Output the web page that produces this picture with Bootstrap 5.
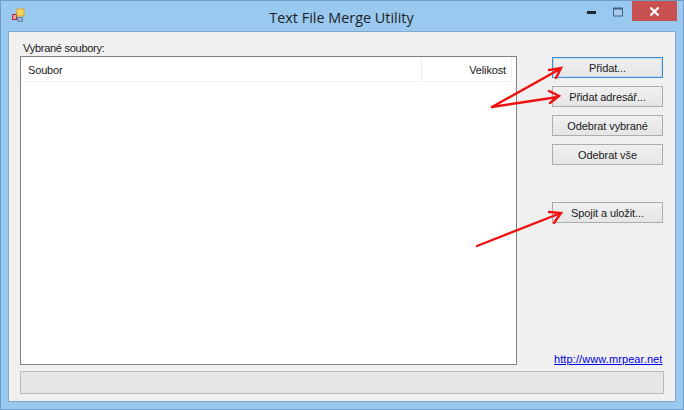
<!DOCTYPE html>
<html lang="cs">
<head>
<meta charset="utf-8">
<title>Text File Merge Utility</title>
<link href="https://cdn.jsdelivr.net/npm/bootstrap@5.3.0/dist/css/bootstrap.min.css" rel="stylesheet">
<style>
html,body{margin:0;height:410px;overflow:hidden;background:#99c9ef}
.win-frame{position:relative;width:684px;height:410px;background:#99c9ef;border:1px solid #6f9fc8;font-family:"Liberation Sans",Arial,sans-serif;font-size:11px;letter-spacing:-.15px;color:#1a1a1a}
.win-title{height:30px;padding-left:10px}
.win-title-text{font-size:14.4px;color:#1f1f1f;letter-spacing:0;left:0;right:1px;top:6px;text-align:center;position:absolute;font-family:"Open Sans","Liberation Sans",sans-serif}
.win-ctrls{margin-left:auto;margin-right:6px;height:21px;align-self:flex-start}
.ctrl-min,.ctrl-max{width:27px;display:flex;align-items:center;justify-content:center}
.ctrl-close{width:45px;height:20px;background:#c75050;display:flex;align-items:center;justify-content:center}
.win-client{margin:0 7px;height:371px;background:#f0f0f0;border:1px solid #82a9cb;border-bottom-color:#7fa6c8;padding:15px 11px 7px 11px}
.lbl{line-height:13px;margin-left:3px;height:10px;margin-top:-5px;margin-bottom:4px;letter-spacing:-.27px}
.upper{height:309px}
.file-list{width:497px;height:309px;background:#fff;border:1px solid #808080}
.list-head{height:25px;border-bottom:1px solid #eef1f6;line-height:27px}
.h-name{width:401px;padding-left:7px;border-right:1px solid #ebedf1}
.h-size{width:90px;text-align:right;padding-right:5px;border-right:1px solid #ebedf1}
.side{width:111px;margin-left:35px;padding-top:1px}
.w-btn{display:block;width:111px;height:21px;padding:0;font-size:11px;line-height:18px;letter-spacing:-.1px;border:1px solid #acacac;border-radius:0;background:linear-gradient(#f0f0f0,#e5e5e5);color:#1a1a1a;margin-bottom:8px}
.w-btn:hover{background:linear-gradient(#f0f0f0,#e5e5e5);color:#1a1a1a;border-color:#acacac}
.w-btn.def{border-color:#3e8ed1;outline:1px solid #c3ddf2;outline-offset:-2px}
.btn-gap{margin-top:29px}
.web{margin-top:auto;margin-left:2px;color:#0000e6;line-height:14px;margin-bottom:-1px;letter-spacing:.1px}
.stat{height:23px;margin-top:6px;width:644px;background:#e6e6e6;border:1px solid #bcbcbc}
.arrows{position:absolute;left:-1px;top:-1px;pointer-events:none}
</style>
</head>
<body>
<div class="win-frame">
  <div class="win-title d-flex align-items-center">
    <svg width="16" height="16" viewBox="0 0 16 16" class="flex-shrink-0"><rect x="1.5" y="6.5" width="4" height="5" fill="#e8a0a0" stroke="#b02a37"/><rect x="6" y="1" width="7" height="7" fill="#f7d75a" stroke="#d1a52a"/><rect x="6.5" y="9.5" width="5" height="4" fill="#8fb1d8" stroke="#6f8fb8"/></svg>
    <div class="win-title-text">Text File Merge Utility</div>
    <div class="win-ctrls d-flex">
      <div class="ctrl-min"><svg width="10" height="4"><rect y="1" width="9" height="3" fill="#1c2a38"/></svg></div>
      <div class="ctrl-max"><svg width="11" height="10"><rect x=".5" y="1" width="9" height="8" fill="#a9cbe9" stroke="#3d6585"/><rect x="1" y="1" width="8" height="1.5" fill="#3d6585"/></svg></div>
      <div class="ctrl-close"><svg width="11" height="11" viewBox="0 0 11 11"><path d="M1.5 1.5l8 8M9.5 1.5l-8 8" stroke="#fff" stroke-width="2.2"/></svg></div>
    </div>
  </div>
  <div class="win-client">
    <div class="lbl">Vybrané soubory:</div>
    <div class="upper d-flex">
      <div class="file-list">
        <div class="list-head d-flex">
          <div class="h-name">Soubor</div>
          <div class="h-size">Velikost</div>
        </div>
      </div>
      <div class="side d-flex flex-column">
        <button type="button" class="btn w-btn def">Přidat...</button>
        <button type="button" class="btn w-btn">Přidat adresář...</button>
        <button type="button" class="btn w-btn">Odebrat vybrané</button>
        <button type="button" class="btn w-btn">Odebrat vše</button>
        <button type="button" class="btn w-btn btn-gap">Spojit a uložit...</button>
        <a class="web" href="#">http://www.mrpear.net</a>
      </div>
    </div>
    <div class="stat"></div>
  </div>
  <svg class="arrows" width="684" height="410" fill="none" stroke="#f01010" stroke-width="2.4" stroke-linecap="round">
    <path d="M492 107L560 69M549 70L561 68L556 78"/>
    <path d="M492 107L558 97M549 91L559 96L550 103"/>
    <path d="M477 246L561 213M549 212L561 213L554 223"/>
  </svg>
</div>
</body>
</html>
